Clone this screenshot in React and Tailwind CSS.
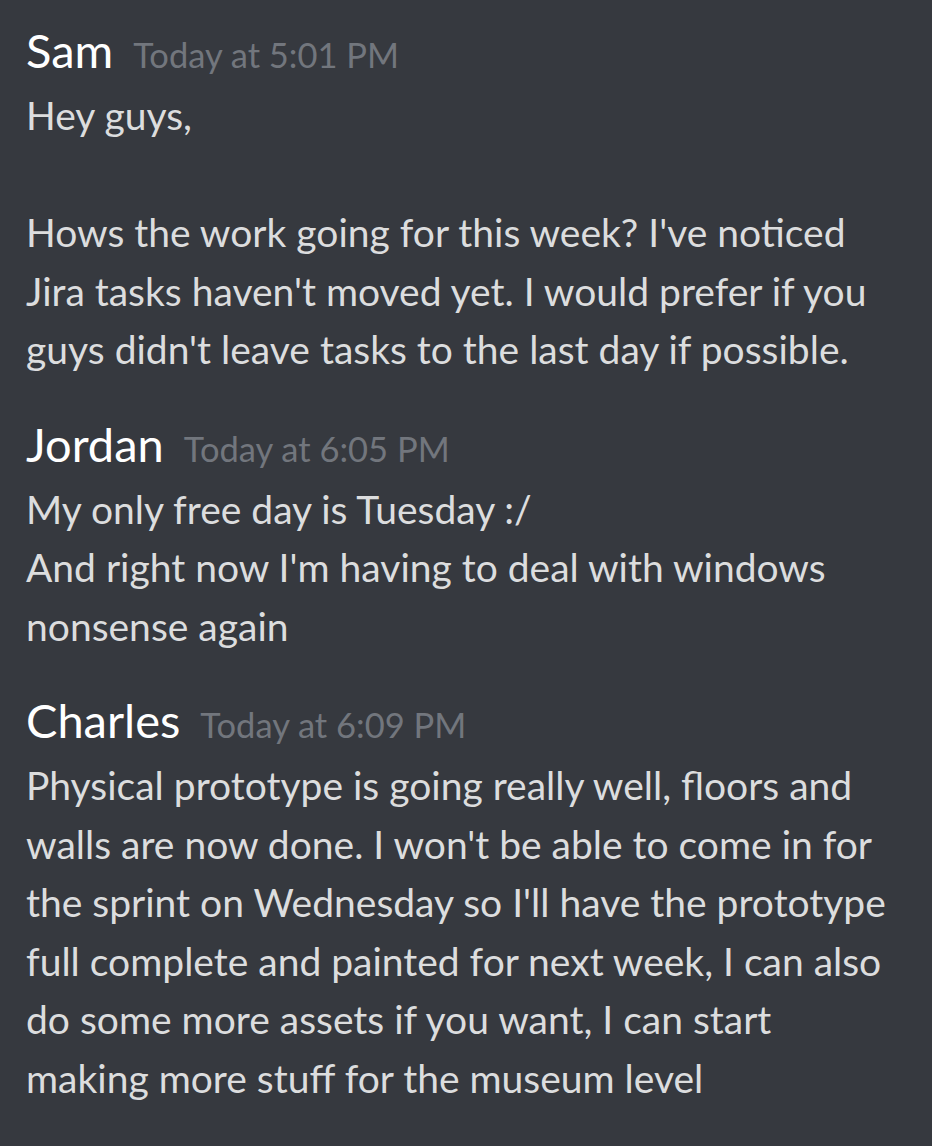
export default function App() {
  const messages = [
    {
      name: "Sam",
      time: "Today at 5:01 PM",
      lines: [
        "Hey guys,",
        "",
        "Hows the work going for this week? I've noticed",
        "Jira tasks haven't moved yet. I would prefer if you",
        "guys didn't leave tasks to the last day if possible.",
      ],
    },
    {
      name: "Jordan",
      time: "Today at 6:05 PM",
      lines: ["My only free day is Tuesday :/", "And right now I'm having to deal with windows", "nonsense again"],
    },
    {
      name: "Charles",
      time: "Today at 6:09 PM",
      lines: [
        "Physical prototype is going really well, floors and",
        "walls are now done. I won't be able to come in for",
        "the sprint on Wednesday so I'll have the prototype",
        "full complete and painted for next week, I can also",
        "do some more assets if you want, I can start",
        "making more stuff for the museum level",
      ],
    },
  ];
  return (
    <div
      className="w-[932px] h-[1146px] bg-[#36393f] overflow-hidden pt-[20px] pl-[26px] pr-[20px]"
      style={{ fontFamily: "Lato, 'Open Sans', sans-serif" }}
    >
      <div className="flex flex-col gap-[35px]">
        {messages.map((m) => (
          <div key={m.name}>
            <div className="flex items-baseline gap-[20px] h-[60px] leading-[60px] whitespace-nowrap">
              <span className="text-[47px] text-white">{m.name}</span>
              <span className="text-[34.5px] text-[#72767d]">{m.time}</span>
            </div>
            <div className="text-[39px] leading-[58.5px] text-[#dcddde] mt-[6px]">
              {m.lines.map((l, i) => (
                <div key={i} className="h-[58.5px] whitespace-nowrap">
                  {l}
                </div>
              ))}
            </div>
          </div>
        ))}
      </div>
    </div>
  );
}
